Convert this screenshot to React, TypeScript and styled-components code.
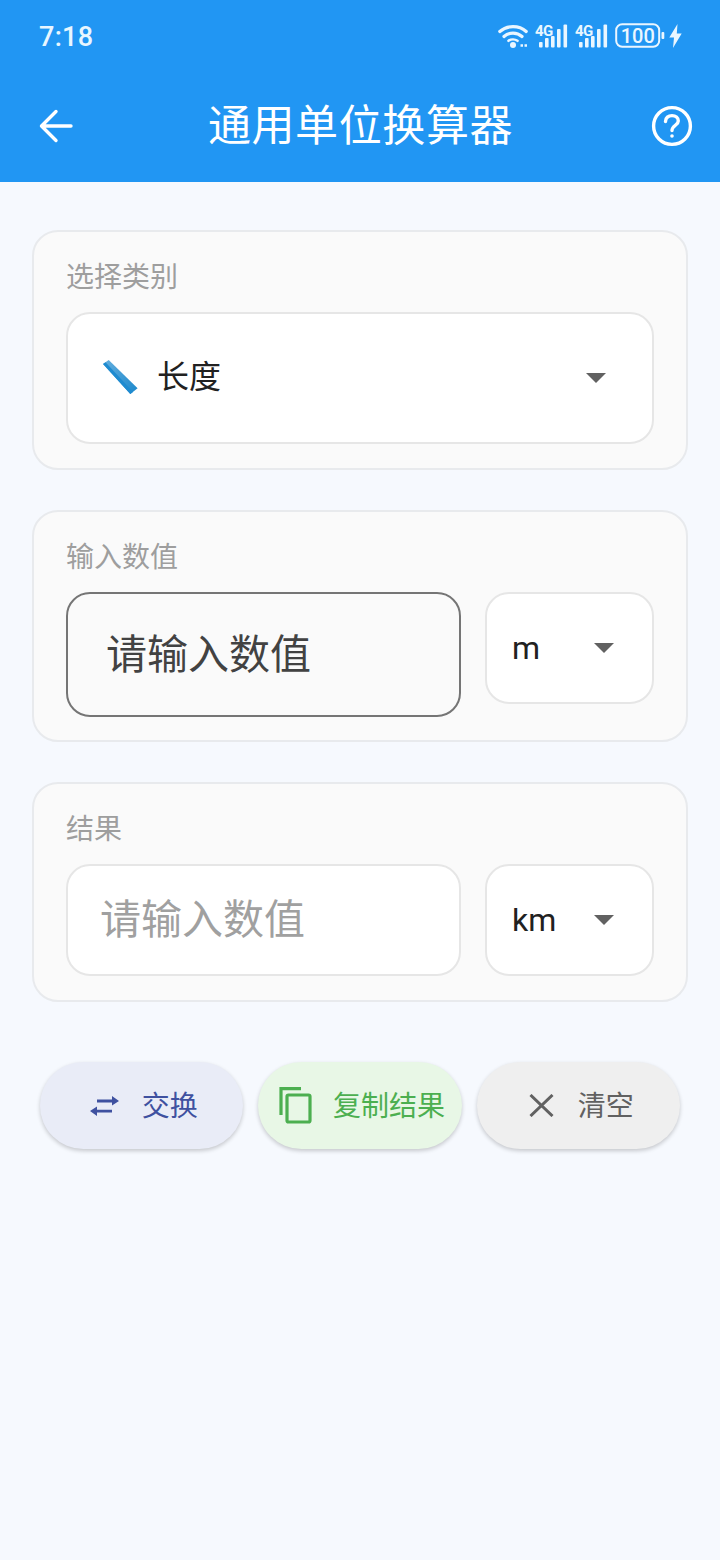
import React from "react"
import styled, { createGlobalStyle } from "styled-components"

const FONT = `Roboto, "Noto Sans CJK SC", sans-serif`

const GlobalStyle = createGlobalStyle`
  html, body {
    margin: 0;
    padding: 0;
    background: #f6f9fe;
    font-family: ${FONT};
  }
  * {
    box-sizing: border-box;
  }
`

const Page = styled.div`
  width: 720px;
  height: 1560px;
  overflow: hidden;
  background: #f6f9fe;
`

const Header = styled.header`
  height: 182px;
  background: #2196f3;
  color: #fff;
  display: flex;
  flex-direction: column;
`

const StatusBar = styled.div`
  height: 72px;
  padding: 0 38px 0 39px;
  display: flex;
  align-items: center;
  justify-content: space-between;
`

const Clock = styled.span`
  margin-top: 2px;
  font-size: 27px;
  font-weight: 500;
  letter-spacing: 0.3px;
  color: #e8f6ff;
`

const StatusIcons = styled.div`
  display: flex;
  align-items: center;
  gap: 7px;
`

const BoltSvg = styled.svg`
  margin-left: -3px;
`

const TitleBar = styled.div`
  flex: 1;
  padding: 0 27px 2px 38px;
  display: flex;
  align-items: center;
  justify-content: space-between;
`

const Title = styled.h1`
  margin: 0 4px 0 0;
  font-size: 43px;
  line-height: 1;
  font-weight: 400;
  letter-spacing: 0.6px;
`

const Main = styled.main`
  padding: 48px 32px 0;
  display: flex;
  flex-direction: column;
  gap: 40px;
`

const Card = styled.section<{ $height: number }>`
  height: ${props => props.$height}px;
  padding: 26px 32px 0;
  background: #fafafa;
  border: 2px solid #e8eaed;
  border-radius: 26px;
`

const Label = styled.div`
  height: 36px;
  font-size: 28px;
  line-height: 39px;
  color: #9e9e9e;
  margin-bottom: 18px;
`

const Row = styled.div`
  display: flex;
  align-items: flex-start;
  gap: 24px;
`

const Box = styled.div<{ $height: number }>`
  height: ${props => props.$height}px;
  background: #fff;
  border: 2px solid #e6e6e6;
  border-radius: 24px;
  display: flex;
  align-items: center;
`

const CategorySelect = styled(Box)`
  padding: 0 46px 0 34px;
  font-size: 32px;
  color: #212121;
`

const CategoryName = styled.span`
  margin: -8px 0 0 19px;
  flex: 1;
`

const ValueBox = styled(Box)`
  width: 395px;
  padding: 0 0 8px 32px;
  font-size: 41px;
  color: #a0a0a0;
`

const ActiveValueBox = styled(ValueBox)`
  background: #fafafa;
  border-color: #757575;
  padding-left: 38px;
  color: #424242;
`

const UnitSelect = styled(Box)`
  width: 169px;
  padding: 0 38px 0 25px;
  justify-content: space-between;
  font-size: 32px;
  color: #212121;
`

const Caret = styled.span`
  width: 0;
  height: 0;
  border-left: 10px solid transparent;
  border-right: 10px solid transparent;
  border-top: 10px solid #616161;
`

const Actions = styled.div`
  margin-top: 20px;
  padding: 0 8px;
  display: flex;
  gap: 15px;
`

const tones = {
  indigo: { bg: "#e9ecf7", fg: "#3f51a0", gap: 22, shift: 4 },
  green: { bg: "#e8f7e6", fg: "#4caf50", gap: 21, shift: 4 },
  grey: { bg: "#efefef", fg: "#616161", gap: 24, shift: 6 },
}

const ActionButton = styled.button<{ $tone: keyof typeof tones }>`
  width: 204px;
  height: 87px;
  padding: 0 0 0 ${props => tones[props.$tone].shift}px;
  border: none;
  border-radius: 44px;
  background: ${props => tones[props.$tone].bg};
  color: ${props => tones[props.$tone].fg};
  box-shadow: 0 2px 4px rgba(0, 0, 0, 0.2);
  font-family: ${FONT};
  font-size: 28px;
  display: flex;
  align-items: center;
  justify-content: center;
  gap: ${props => tones[props.$tone].gap}px;
`

const ActionText = styled.span`
  margin-top: -4px;
`

const Wifi = () => (
  <svg width="30" height="24" viewBox="0 0 30 24" fill="none" stroke="#eaf6ff" strokeLinecap="round">
    <path d="M1.8 7.5C9 1 21 1 28.2 7.5" strokeWidth="3.2" />
    <path d="M6 12.5C11 8 19 8 24 12.5" strokeWidth="3.2" />
    <path d="M10.5 16.8C13 15 17 15 19.5 16.8" strokeWidth="2.6" />
    <circle cx="15" cy="21" r="3" fill="#eaf6ff" stroke="none" />
    <path d="M22.5 21.5h7.5" strokeWidth="2.4" strokeDasharray="2.5 1.5" strokeLinecap="butt" />
  </svg>
)

const Signal = () => (
  <svg width="33" height="28" viewBox="0 -2 33 28" fill="#eaf6ff">
    <text x="0" y="12" fontFamily="Roboto, sans-serif" fontSize="15" fontWeight="700" letterSpacing="-0.5">4G</text>
    <rect x="4" y="18" width="3.6" height="5.5" rx="1" />
    <rect x="10" y="14" width="3.6" height="9.5" rx="1" />
    <rect x="16" y="12" width="3.6" height="11.5" rx="1" />
    <rect x="22" y="5" width="3.6" height="18.5" rx="1" />
    <rect x="28.5" y="0.5" width="3.6" height="23" rx="1" />
  </svg>
)

const Battery = () => (
  <svg width="50" height="26" viewBox="0 0 50 26" fill="none">
    <rect x="1.2" y="1.2" width="43" height="22.5" rx="6" stroke="#eaf6ff" strokeWidth="2" />
    <text x="22.7" y="20" textAnchor="middle" fill="#eaf6ff" fontFamily="Roboto, sans-serif" fontSize="20" fontWeight="500">100</text>
    <rect x="46.5" y="9" width="2.8" height="7" rx="1" fill="#eaf6ff" />
  </svg>
)

const Bolt = () => (
  <BoltSvg width="13" height="24" viewBox="0 0 13 24" fill="#eaf6ff">
    <path d="M8.5 0L0.3 13.5H5L4 24L12.7 9.5H7.8Z" />
  </BoltSvg>
)

const BackArrow = () => (
  <svg width="36" height="36" viewBox="0 0 36 36" fill="none" stroke="#fff" strokeWidth="3.4" strokeLinecap="round" strokeLinejoin="round">
    <path d="M33 18H3.5M18 3.5L3.5 18L18 32.5" />
  </svg>
)

const HelpIcon = () => (
  <svg width="42" height="42" viewBox="0 0 42 42" fill="none" stroke="#fff" strokeWidth="3.4" strokeLinecap="round">
    <circle cx="21" cy="21" r="18.4" />
    <path d="M14.5 16.5C14.5 12.8 17.4 10.6 21 10.6C24.6 10.6 27.3 12.9 27.3 16C27.3 20.2 21 20.4 21 25.6" />
    <circle cx="21" cy="31" r="1.8" fill="#fff" stroke="none" />
  </svg>
)

const Ruler = () => (
  <svg width="36" height="36" viewBox="0 1.5 36 36">
    <defs>
      <linearGradient id="ruler" x1="0" y1="0" x2="1" y2="1">
        <stop offset="0" stopColor="#63aede" />
        <stop offset="1" stopColor="#1c88cc" />
      </linearGradient>
    </defs>
    <path d="M1 5.5L6.7 1.5L35.6 29.8L28.3 35.5Z" fill="url(#ruler)" />
    <path d="M1 5.5L28.3 35.5L31 33.4L3.5 3.7Z" fill="#1f8bd0" />
  </svg>
)

const SwapIcon = () => (
  <svg width="30" height="20" viewBox="0 0 30 20" fill="#3f51a0">
    <path d="M7 3.6H22V0L29 5L22 9.5V6.4H7Z" />
    <path d="M22 13.8H7V10.5L0 15L7 20V16.6H22Z" />
  </svg>
)

const CopyIcon = () => (
  <svg width="33" height="37" viewBox="0 0 33 37" fill="none" stroke="#4caf50" strokeWidth="3.2">
    <path d="M22 1.6H2V28" />
    <rect x="8" y="8" width="23" height="27" rx="1.5" />
  </svg>
)

const ClearIcon = () => (
  <svg width="25" height="23" viewBox="0 0 25 23" fill="none" stroke="#616161" strokeWidth="3">
    <path d="M1.5 1L23.5 22M23.5 1L1.5 22" />
  </svg>
)

const App = () => {
  return (
    <Page>
      <GlobalStyle />
      <Header>
        <StatusBar>
          <Clock>7:18</Clock>
          <StatusIcons>
            <Wifi />
            <Signal />
            <Signal />
            <Battery />
            <Bolt />
          </StatusIcons>
        </StatusBar>
        <TitleBar>
          <BackArrow />
          <Title>通用单位换算器</Title>
          <HelpIcon />
        </TitleBar>
      </Header>
      <Main>
        <Card $height={240}>
          <Label>选择类别</Label>
          <CategorySelect $height={132}>
            <Ruler />
            <CategoryName>长度</CategoryName>
            <Caret />
          </CategorySelect>
        </Card>
        <Card $height={232}>
          <Label>输入数值</Label>
          <Row>
            <ActiveValueBox $height={125}>请输入数值</ActiveValueBox>
            <UnitSelect $height={112}>
              <span>m</span>
              <Caret />
            </UnitSelect>
          </Row>
        </Card>
        <Card $height={220}>
          <Label>结果</Label>
          <Row>
            <ValueBox $height={112}>请输入数值</ValueBox>
            <UnitSelect $height={112}>
              <span>km</span>
              <Caret />
            </UnitSelect>
          </Row>
        </Card>
        <Actions>
          <ActionButton $tone="indigo">
            <SwapIcon />
            <ActionText>交换</ActionText>
          </ActionButton>
          <ActionButton $tone="green">
            <CopyIcon />
            <ActionText>复制结果</ActionText>
          </ActionButton>
          <ActionButton $tone="grey">
            <ClearIcon />
            <ActionText>清空</ActionText>
          </ActionButton>
        </Actions>
      </Main>
    </Page>
  )
}

export default App
